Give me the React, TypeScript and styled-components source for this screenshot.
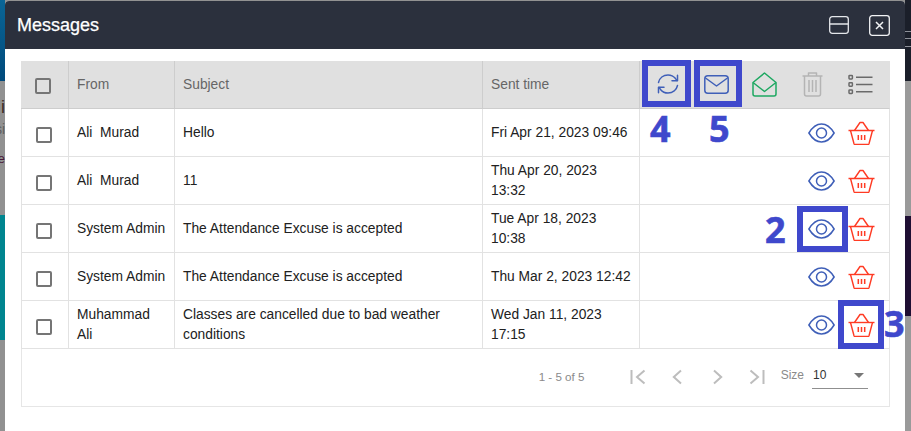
import React from "react";
import styled, { createGlobalStyle } from "styled-components";

const Global = createGlobalStyle`
  html, body { margin: 0; padding: 0; background: #fff; overflow: hidden; }
  body { font-family: "Liberation Sans", Arial, sans-serif; }
  * { box-sizing: border-box; }
`;

const Page = styled.div`
  width: 911px; height: 431px; display: flex; overflow: hidden; background: #929292;
`;
const Strip = styled.div<{ $w: number }>`
  width: ${(p) => p.$w}px; flex: none; display: flex; flex-direction: column; overflow: hidden;
`;
const Band = styled.div<{ $h?: number; $bg: string }>`
  ${(p) => (p.$h ? `height: ${p.$h}px; flex: none;` : "flex: 1;")}
  background: ${(p) => p.$bg};
  position: relative; overflow: hidden;
`;
const PeekText = styled.div<{ $top: number; $size: number; $color: string }>`
  position: absolute; right: 0; top: ${(p) => p.$top}px;
  font-size: ${(p) => p.$size}px; line-height: 1; color: ${(p) => p.$color}; white-space: nowrap;
`;
const PeekLine = styled.div<{ $top: number }>`
  position: absolute; left: 0; right: 0; top: ${(p) => p.$top}px; height: 1px; background: #8d9099;
`;

const Dialog = styled.div`
  width: 900px; flex: none; margin-top: 1px; background: #fff; position: relative;
  border-radius: 4px 4px 0 0; overflow: hidden;
`;
const Header = styled.header`
  height: 48px; background: #2b303d; display: flex; align-items: center; padding: 0 15px 0 12px;
`;
const Title = styled.h1`
  flex: 1; margin: 0; font-size: 18px; font-weight: 400; color: #fff; -webkit-text-stroke: 0.25px #fff;
`;
const HeaderIcons = styled.div`
  display: flex; align-items: center; gap: 20px;
`;
const IconBtn = styled.span`
  display: flex; line-height: 0;
`;
const Body = styled.div`
  padding: 12px 16px 0;
`;
const Table = styled.table`
  width: 869px; table-layout: fixed; border-collapse: separate; border-spacing: 0;
`;
const Th = styled.th<{ $w: number; $plain?: boolean }>`
  width: ${(p) => p.$w}px; height: 48px; background: #e0e0e0; padding: 0 8px 1px;
  border-bottom: 1px solid #cdcdcd; border-right: 1px solid ${(p) => (p.$plain ? "#e0e0e0" : "#cdcdcd")};
  text-align: left; font-size: 13.8px; font-weight: 400; color: #666;
`;
const Td = styled.td`
  height: 48px; padding: 0 8px; font-size: 13.8px; line-height: 20px; color: #212121;
  border-bottom: 1px solid #e2e2e2; border-right: 1px solid #e2e2e2;
  &:first-child { border-left: 1px solid #e2e2e2; }
`;
const Check = styled.span`
  display: block; width: 16px; height: 16px; margin: 4px 0 0 6px;
  border: 2px solid #757575; border-radius: 2px; background: transparent;
`;
const Toolbar = styled.div`
  display: flex; margin-left: -4px; margin-right: -8px;
`;
const ToolButton = styled.span`
  width: 48px; display: flex; justify-content: center; align-items: center; line-height: 0;
`;
const RowActions = styled.div`
  display: flex; justify-content: flex-end; align-items: center; gap: 13px; padding-right: 6px;
`;
const Footer = styled.div`
  width: 869px; height: 58px; border: 1px solid #e6e6e6; border-top: 0;
  display: flex; align-items: flex-start; padding: 21px 21px 0 0;
`;
const Range = styled.span`
  margin-left: auto; font-size: 11.6px; line-height: 14px; color: #8a8a8a; width: 91px;
`;
const Pager = styled.div`
  display: flex; align-items: center; gap: 26px; margin-top: -1px; line-height: 0;
  & > :nth-child(3) { margin-left: 5px; }
`;
const SizeLabel = styled.span`
  margin: -2px 0 0 16px; font-size: 12px; line-height: 14px; color: #8a8a8a;
`;
const SizeSelect = styled.div`
  margin: -2px 0 0 8px; width: 56px; height: 21px; display: flex; justify-content: space-between;
  align-items: flex-start; border-bottom: 1px solid #8f8f8f; padding: 0 4px 0 1px;
  font-size: 12px; line-height: 14px; color: #333;
`;
const Caret = styled.span`
  width: 0; height: 0; margin-top: 5px; border-left: 5px solid transparent; border-right: 5px solid transparent;
  border-top: 5px solid #777;
`;
const Mark = styled.div<{ $x: number; $y: number; $w: number; $h: number }>`
  position: absolute; left: ${(p) => p.$x - 5}px; top: ${(p) => p.$y - 1}px;
  width: ${(p) => p.$w}px; height: ${(p) => p.$h}px; border: 6px solid #3f48cc;
`;
const Num = styled.div<{ $x: number; $y: number }>`
  position: absolute; left: ${(p) => p.$x - 5}px; top: ${(p) => p.$y - 1}px;
  font-family: "Open Sans", sans-serif; font-weight: 700; font-size: 36px; line-height: 36px; color: #3f48cc;
  -webkit-text-stroke: 0.6px #3f48cc;
`;

const WindowIcon = () => (
  <svg width="20" height="18" viewBox="0 0 20 18" fill="none" stroke="#e4e6ea" strokeWidth="1.3">
    <rect x="0.7" y="0.7" width="18.6" height="16.6" rx="2.5" />
    <path d="M0.7 8H19.3" />
  </svg>
);
const CloseIcon = () => (
  <svg width="21" height="21" viewBox="0 0 21 21" fill="none" stroke="#f2f3f5">
    <rect x="0.7" y="0.7" width="19.6" height="19.6" rx="2.5" strokeWidth="1.3" />
    <path d="M7 7L14 14M14 7L7 14" strokeWidth="1.5" />
  </svg>
);
const RefreshIcon = () => (
  <svg width="24" height="24" viewBox="0 0 24 24" fill="none" stroke="#3f5fb8" strokeWidth="1.5" strokeLinecap="round" strokeLinejoin="round">
    <path d="M2.5 10.5C3.5 6 7.3 3 12 3c3 0 5.6 1.3 7.5 3.6L21 8.5" />
    <path d="M21.5 3.2V8.7H16" />
    <path d="M21.5 13.5C20.5 18 16.7 21 12 21c-3 0-5.6-1.3-7.5-3.6L3 15.5" />
    <path d="M2.5 20.8V15.3H8" />
  </svg>
);
const MailIcon = () => (
  <svg width="25" height="19" viewBox="0 0 25 19" fill="none" stroke="#3f5fb8" strokeWidth="1.5" strokeLinejoin="round">
    <rect x="0.8" y="0.8" width="23.4" height="17.4" rx="3" />
    <path d="M1.5 3L12.5 11L23.5 3" />
  </svg>
);
const OpenMailIcon = () => (
  <svg width="25" height="25" viewBox="0 0 25 25" fill="none" stroke="#1ea862" strokeWidth="1.5" strokeLinejoin="round">
    <path d="M1 10.5L12.5 1L24 10.5V22a2 2 0 0 1-2 2H3a2 2 0 0 1-2-2Z" />
    <path d="M1 10.5L12.5 19.5L24 10.5" />
  </svg>
);
const TrashIcon = () => (
  <svg width="21" height="25" viewBox="0 0 21 25" fill="none" stroke="#b4b4b4" strokeWidth="1.5" strokeLinejoin="round">
    <path d="M0.5 4H20.5" />
    <path d="M6.5 4V1H14.5V4" />
    <path d="M2.5 4V22a2 2 0 0 0 2 2H16.5a2 2 0 0 0 2-2V4" />
    <path d="M7 8V20M10.5 8V20M14 8V20" />
  </svg>
);
const ListIcon = () => (
  <svg width="25" height="21" viewBox="0 0 25 21" fill="none" stroke="#6a6a6a" strokeWidth="1.5">
    <rect x="1" y="1.5" width="3.4" height="3.4" rx="0.6" />
    <rect x="1" y="8.8" width="3.4" height="3.4" rx="0.6" />
    <rect x="1" y="16" width="3.4" height="3.4" rx="0.6" />
    <path d="M8 3.2H24.5M8 10.5H24.5M8 17.7H24.5" />
  </svg>
);
const EyeIcon = () => (
  <svg width="27" height="20" viewBox="0 0 27 20" fill="none" stroke="#3f5fb8" strokeWidth="1.5">
    <path d="M0.9 10C4.5 4 8.8 1 13.5 1S22.5 4 26.1 10C22.5 16 18.2 19 13.5 19S4.5 16 0.9 10Z" />
    <circle cx="13.5" cy="10" r="5" />
  </svg>
);
const BasketIcon = () => (
  <svg width="27" height="24" viewBox="0 0 27 24" fill="none" stroke="#ff3b24" strokeWidth="1.4" strokeLinejoin="round">
    <path d="M0.5 9.5H26.5" />
    <path d="M2.5 9.5L6 22.8a1 1 0 0 0 1 .7H20a1 1 0 0 0 1-.7L24.5 9.5" />
    <path d="M6.5 9.5L12 1.5H15L20.5 9.5" />
    <path d="M10.3 14V19M13.5 14V19M16.7 14V19" strokeWidth="1.5" />
  </svg>
);
const PageFirst = () => (
  <svg width="16" height="16" viewBox="0 0 16 16" fill="none" stroke="#bdbdbd" strokeWidth="2">
    <path d="M1.5 1V15" />
    <path d="M14.5 1.5L7 8L14.5 14.5" />
  </svg>
);
const PagePrev = () => (
  <svg width="10" height="16" viewBox="0 0 10 16" fill="none" stroke="#bdbdbd" strokeWidth="2">
    <path d="M9 1.5L1.8 8L9 14.5" />
  </svg>
);
const PageNext = () => (
  <svg width="10" height="16" viewBox="0 0 10 16" fill="none" stroke="#bdbdbd" strokeWidth="2">
    <path d="M1 1.5L8.2 8L1 14.5" />
  </svg>
);
const PageLast = () => (
  <svg width="16" height="16" viewBox="0 0 16 16" fill="none" stroke="#bdbdbd" strokeWidth="2">
    <path d="M14.5 1V15" />
    <path d="M1.5 1.5L9 8L1.5 14.5" />
  </svg>
);

const rows: { from: string; subject: string; time: string }[] = [
  { from: "Ali\u00a0 Murad", subject: "Hello", time: "Fri Apr 21, 2023 09:46" },
  { from: "Ali\u00a0 Murad", subject: "11", time: "Thu Apr 20, 2023 13:32" },
  { from: "System Admin", subject: "The Attendance Excuse is accepted", time: "Tue Apr 18, 2023 10:38" },
  { from: "System Admin", subject: "The Attendance Excuse is accepted", time: "Thu Mar 2, 2023 12:42" },
  { from: "Muhammad Ali", subject: "Classes are cancelled due to bad weather conditions", time: "Wed Jan 11, 2023 17:15" },
];

export default function App() {
  return (
    <Page>
      <Global />
      <Strip $w={5}>
        <Band $h={81} $bg="linear-gradient(#0a6596, #004a7c)" />
        <Band $h={134} $bg="#919191">
          <PeekText $top={17} $size={18} $color="#3b2a22">i</PeekText>
          <PeekText $top={41} $size={14} $color="#5e5e5e">si</PeekText>
          <PeekText $top={71} $size={13} $color="#4a1a3a">ue</PeekText>
        </Band>
        <Band $h={125} $bg="#00858f" />
        <Band $bg="#919191" />
      </Strip>
      <Dialog>
        <Header>
          <Title>Messages</Title>
          <HeaderIcons>
            <IconBtn><WindowIcon /></IconBtn>
            <IconBtn><CloseIcon /></IconBtn>
          </HeaderIcons>
        </Header>
        <Body>
          <Table>
            <thead>
              <tr>
                <Th $w={48}><Check /></Th>
                <Th $w={106}>From</Th>
                <Th $w={308}>Subject</Th>
                <Th $w={157}>Sent time</Th>
                <Th $w={250} $plain>
                  <Toolbar>
                    <ToolButton><RefreshIcon /></ToolButton>
                    <ToolButton><MailIcon /></ToolButton>
                    <ToolButton><OpenMailIcon /></ToolButton>
                    <ToolButton><TrashIcon /></ToolButton>
                    <ToolButton><ListIcon /></ToolButton>
                  </Toolbar>
                </Th>
              </tr>
            </thead>
            <tbody>
              {rows.map((r, i) => (
                <tr key={i}>
                  <Td><Check /></Td>
                  <Td>{r.from}</Td>
                  <Td>{r.subject}</Td>
                  <Td>{r.time}</Td>
                  <Td>
                    <RowActions>
                      <IconBtn><EyeIcon /></IconBtn>
                      <IconBtn><BasketIcon /></IconBtn>
                    </RowActions>
                  </Td>
                </tr>
              ))}
            </tbody>
          </Table>
          <Footer>
            <Range>1 - 5 of 5</Range>
            <Pager>
              <IconBtn><PageFirst /></IconBtn>
              <IconBtn><PagePrev /></IconBtn>
              <IconBtn><PageNext /></IconBtn>
              <IconBtn><PageLast /></IconBtn>
            </Pager>
            <SizeLabel>Size</SizeLabel>
            <SizeSelect>
              <span>10</span>
              <Caret />
            </SizeSelect>
          </Footer>
        </Body>
        <Mark $x={642} $y={60} $w={49} $h={47} />
        <Mark $x={694} $y={60} $w={48} $h={47} />
        <Mark $x={797} $y={206} $w={51} $h={46} />
        <Mark $x={838} $y={300} $w={46} $h={49} />
        <Num $x={650} $y={111}>4</Num>
        <Num $x={709} $y={111}>5</Num>
        <Num $x={765} $y={212}>2</Num>
        <Num $x={884} $y={306}>3</Num>
      </Dialog>
      <Strip $w={6}>
        <Band $h={81} $bg="#1b1f2a">
          <PeekLine $top={31} />
          <PeekLine $top={38} />
          <PeekLine $top={46} />
        </Band>
        <Band $h={135} $bg="#9a9a9a" />
        <Band $h={100} $bg="#1f0f33" />
        <Band $bg="#9a9a9a" />
      </Strip>
    </Page>
  );
}
